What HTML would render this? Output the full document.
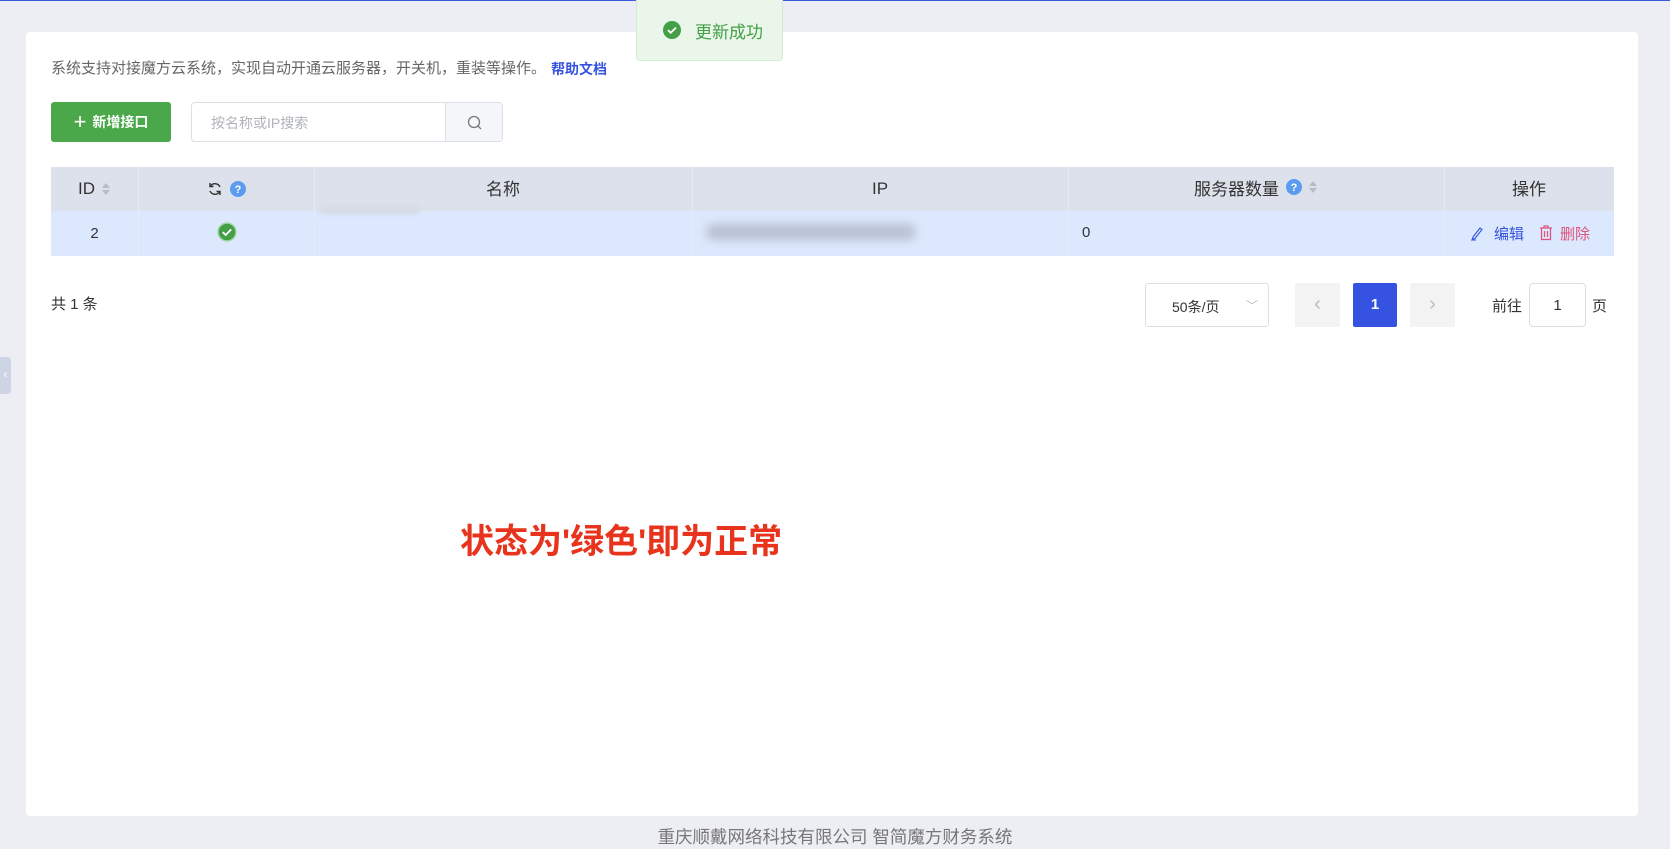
<!DOCTYPE html>
<html><head><meta charset="utf-8"><style>
*{box-sizing:border-box;margin:0;padding:0}
body{width:1670px;height:847px;background:#eceef3;font-family:"Liberation Sans","Noto Sans CJK SC",sans-serif;position:relative;overflow:hidden;color:#333}
.abs{position:absolute}
.card{left:26px;top:32px;width:1612px;height:784px;background:#fff;border-radius:4px}
.th,.td{position:absolute;display:flex;align-items:center;justify-content:center;font-size:17px}
</style></head><body>
<div class="abs" style="left:0;top:0;width:1670px;height:1px;background:#3b5bdb"></div>
<div class="abs card"></div>
<div class="abs" style="left:0;top:357px;width:11px;height:37px;background:#cdd5e4;border-radius:0 4px 4px 0;color:#fff;font-size:11px;line-height:37px;text-align:center">‹</div>

<div class="abs" style="left:636px;top:0;width:147px;height:61px;background:#eaf6ea;border:1px solid #d4ecd4;border-top:none;border-radius:0 0 4px 4px"></div>
<svg class="abs" style="left:663px;top:21px" width="18" height="18" viewBox="0 0 18 18"><circle cx="9" cy="9" r="9" fill="#43a047"/><path d="M5 9.2l2.7 2.6L13 6.6" stroke="#fff" stroke-width="1.8" fill="none"/></svg>
<div class="abs" style="left:695px;top:18px;font-size:17px;color:#43a047">更新成功</div>

<div class="abs" style="left:51px;top:57px;font-size:15px;color:#666">系统支持对接魔方云系统，实现自动开通云服务器，开关机，重装等操作。</div>
<div class="abs" style="left:551px;top:59px;font-size:14px;color:#3553e0;font-weight:bold">帮助文档</div>

<div class="abs" style="left:51px;top:102px;width:120px;height:40px;background:#4aa84a;border-radius:3px;color:#fff;font-size:14px;font-weight:bold;display:flex;align-items:center;justify-content:center"><span style="font-size:22px;font-weight:normal;margin-right:6px;line-height:1">+</span>新增接口</div>
<div class="abs" style="left:191px;top:102px;width:312px;height:40px;border:1px solid #dcdfe6;border-radius:4px;overflow:hidden">
<div class="abs" style="left:19px;top:10px;font-size:14px;color:#b0b3ba">按名称或IP搜索</div>
<div class="abs" style="left:253px;top:0;width:58px;height:38px;background:#f5f6f9;border-left:1px solid #dcdfe6"></div>
<svg class="abs" style="left:275px;top:12px" width="16" height="16" viewBox="0 0 16 16"><circle cx="7" cy="7" r="5.5" stroke="#777" stroke-width="1.3" fill="none"/><path d="M11 11l3 3" stroke="#777" stroke-width="1.3"/></svg>
</div>

<div class="abs" style="left:51px;top:167px;width:1563px;height:44px;background:#dde1ec"></div>
<div class="abs" style="left:51px;top:211px;width:1563px;height:45px;background:#dce8fd"></div>
<div class="abs" style="left:138px;top:167px;width:1px;height:89px;background:#e8ebf2"></div>
<div class="abs" style="left:314px;top:167px;width:1px;height:89px;background:#e8ebf2"></div>
<div class="abs" style="left:692px;top:167px;width:1px;height:89px;background:#e8ebf2"></div>
<div class="abs" style="left:1068px;top:167px;width:1px;height:89px;background:#e8ebf2"></div>
<div class="abs" style="left:1444px;top:167px;width:1px;height:89px;background:#e8ebf2"></div>

<div class="th" style="left:51px;top:167px;width:87px;height:44px">ID<svg style="margin-left:6px" width="10" height="16" viewBox="0 0 10 16"><path d="M1 7L5 2l4 5z M1 9l4 5 4-5z" fill="#b8bcc6"/></svg></div>
<div class="th" style="left:138px;top:167px;width:176px;height:44px"><svg width="16" height="16" viewBox="0 0 16 16"><path d="M13 6A5.5 5.5 0 0 0 3.5 5M3 10a5.5 5.5 0 0 0 9.5 1" stroke="#333" stroke-width="1.4" fill="none"/><path d="M3 2v3.5h3.5M13 14v-3.5H9.5" stroke="#333" stroke-width="1.4" fill="none"/></svg><svg style="margin-left:7px" width="16" height="16" viewBox="0 0 16 16"><circle cx="8" cy="8" r="8" fill="#5b9bf0"/><text x="8" y="12" text-anchor="middle" font-size="11" fill="#fff" font-family="Liberation Sans" font-weight="bold">?</text></svg></div>
<div class="th" style="left:314px;top:165px;width:378px;height:44px">名称</div>
<div class="th" style="left:692px;top:167px;width:376px;height:44px">IP</div>
<div class="th" style="left:1068px;top:165px;width:376px;height:44px">服务器数量<svg style="margin-left:7px" width="16" height="16" viewBox="0 0 16 16"><circle cx="8" cy="8" r="8" fill="#5b9bf0"/><text x="8" y="12" text-anchor="middle" font-size="11" fill="#fff" font-family="Liberation Sans" font-weight="bold">?</text></svg><svg style="margin-left:6px" width="10" height="16" viewBox="0 0 10 16"><path d="M1 7L5 2l4 5z M1 9l4 5 4-5z" fill="#b8bcc6"/></svg></div>
<div class="th" style="left:1444px;top:165px;width:170px;height:44px">操作</div>

<div class="td" style="left:51px;top:211px;width:87px;height:45px;font-size:15px">2</div>
<svg class="abs" style="left:217px;top:222px" width="20" height="20" viewBox="0 0 20 20"><circle cx="10" cy="10" r="9" fill="#43a047" stroke="#a5d6a7" stroke-width="1.5"/><path d="M5.8 10.2l2.9 2.8 5.5-5.6" stroke="#fff" stroke-width="1.8" fill="none"/></svg>
<div class="abs" style="left:320px;top:206px;width:100px;height:8px;background:#d6dbe5;filter:blur(2px)"></div>
<div class="abs" style="left:706px;top:224px;width:210px;height:16px;background:#a9afbd;border-radius:8px;filter:blur(5px);opacity:.7"></div>
<div class="abs" style="left:1082px;top:224px;font-size:15px">0</div>
<svg class="abs" style="left:1470px;top:225px" width="14" height="16" viewBox="0 0 14 16"><path d="M3 12L10 3l2 1.5-7 9L2.5 14z M1 15h5" stroke="#3553e0" stroke-width="1.1" fill="none"/></svg>
<div class="abs" style="left:1494px;top:223px;font-size:15px;color:#3553e0">编辑</div>
<svg class="abs" style="left:1539px;top:225px" width="14" height="16" viewBox="0 0 14 16"><path d="M1 3h12M5 3V1h4v2M2.5 3.5v11h9v-11M5.5 6v6M8.5 6v6" stroke="#e0527a" stroke-width="1.2" fill="none"/></svg>
<div class="abs" style="left:1560px;top:223px;font-size:15px;color:#e0527a">删除</div>

<div class="abs" style="left:51px;top:293px;font-size:15px">共 1 条</div>
<div class="abs" style="left:1145px;top:283px;width:124px;height:44px;border:1px solid #dcdfe6;border-radius:3px;font-size:14px;padding:13px 0 0 26px">50条/页<span style="position:absolute;right:10px;top:13px;color:#bbb;font-size:12px">﹀</span></div>
<div class="abs" style="left:1295px;top:283px;width:45px;height:44px;background:#f3f3f4;border-radius:2px;color:#bbb;font-size:20px;text-align:center;line-height:42px">‹</div>
<div class="abs" style="left:1353px;top:283px;width:44px;height:44px;background:#3553e0;border-radius:2px;color:#fff;font-size:15px;font-weight:bold;text-align:center;line-height:44px">1</div>
<div class="abs" style="left:1410px;top:283px;width:45px;height:44px;background:#f3f3f4;border-radius:2px;color:#bbb;font-size:20px;text-align:center;line-height:42px">›</div>
<div class="abs" style="left:1492px;top:295px;font-size:15px">前往</div>
<div class="abs" style="left:1529px;top:283px;width:57px;height:44px;border:1px solid #dcdfe6;border-radius:4px;font-size:15px;text-align:center;line-height:44px">1</div>
<div class="abs" style="left:1592px;top:295px;font-size:15px">页</div>

<div class="abs" style="left:460px;top:514px;font-size:34px;font-weight:bold;color:#e8341c">状态为'绿色'即为正常</div>

<div class="abs" style="left:0;top:824px;width:1670px;text-align:center;font-size:17.5px;color:#777">重庆顺戴网络科技有限公司 智简魔方财务系统</div>
</body></html>
